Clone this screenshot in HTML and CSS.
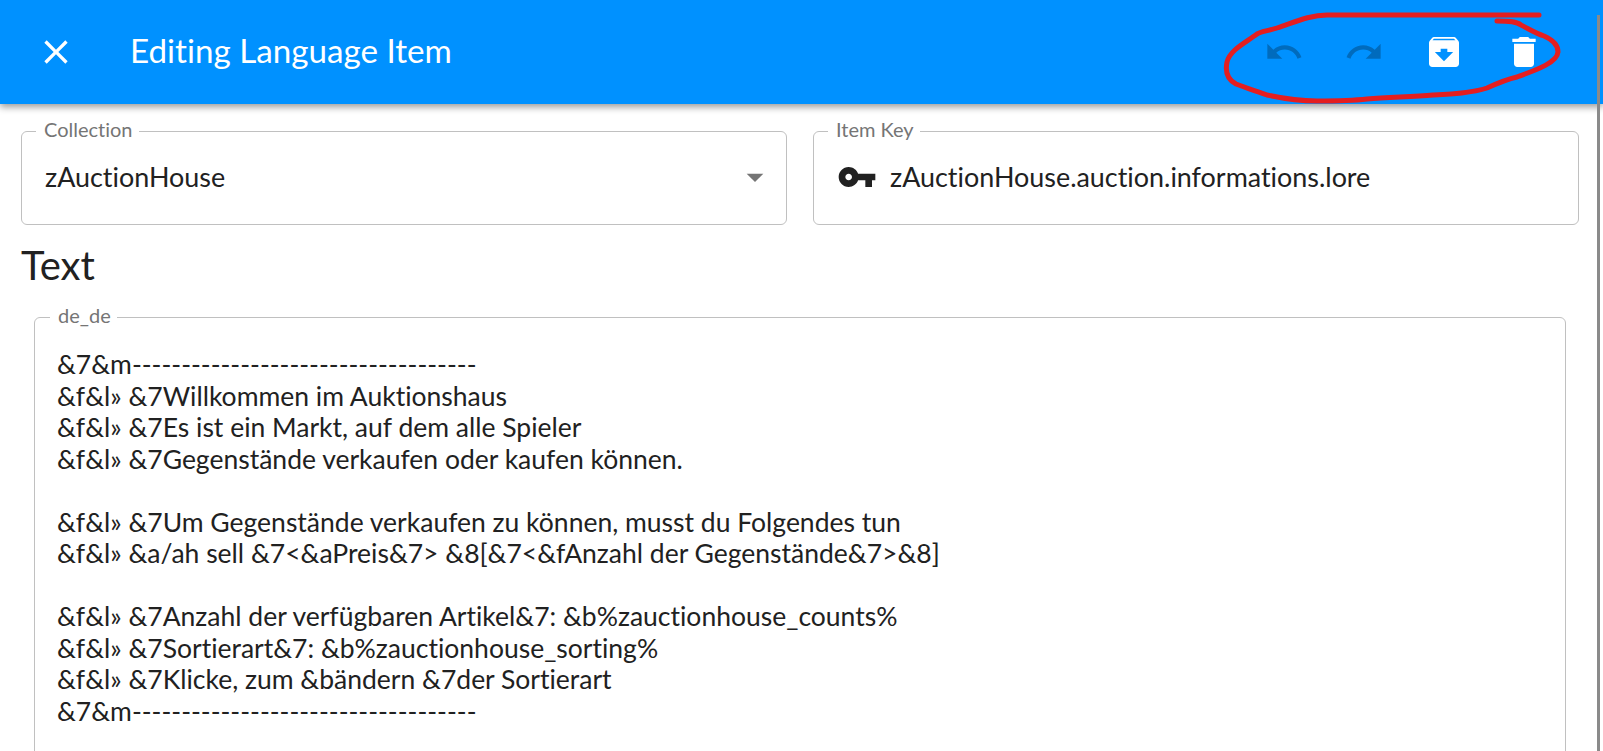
FILE: index.html
```html
<!DOCTYPE html>
<html lang="en">
<head>
    <meta charset="UTF-8">
    <meta name="viewport" content="width=device-width, initial-scale=1.0">
    <title>Editing Language Item</title>
    <link rel="stylesheet" href="styles.css">
</head>
<body>
    <header class="app-bar">
        <svg class="icon close-icon" viewBox="0 0 24 24"><path d="M19 6.41L17.59 5 12 10.59 6.41 5 5 6.41 10.59 12 5 17.59 6.41 19 12 13.41 17.59 19 19 17.59 13.41 12z"/></svg>
        <h1 class="app-title">Editing Language Item</h1>
        <div class="actions">
            <svg class="icon action-icon disabled" viewBox="0 0 24 24"><path d="M12.5 8c-2.65 0-5.05.99-6.9 2.6L2 7v9h9l-3.62-3.62c1.39-1.16 3.16-1.88 5.12-1.88 3.54 0 6.55 2.31 7.6 5.5l2.37-.78C21.08 11.03 17.15 8 12.5 8z"/></svg>
            <svg class="icon action-icon disabled" viewBox="0 0 24 24"><path d="M18.4 10.6C16.55 8.99 14.15 8 11.5 8c-4.65 0-8.58 3.03-9.96 7.22L3.9 16c1.05-3.19 4.05-5.5 7.6-5.5 1.95 0 3.73.72 5.12 1.88L13 16h9V7l-3.6 3.6z"/></svg>
            <svg class="icon action-icon" viewBox="0 0 24 24"><path d="M20.54 5.23l-1.39-1.68C18.88 3.21 18.47 3 18 3H6c-.47 0-.88.21-1.16.55L3.46 5.23C3.17 5.57 3 6.02 3 6.5V19c0 1.1.9 2 2 2h14c1.1 0 2-.9 2-2V6.5c0-.48-.17-.93-.46-1.27zM12 17.5L6.5 12H10v-2h4v2h3.5L12 17.5zM5.12 5l.81-1h12l.94 1H5.12z"/></svg>
            <svg class="icon action-icon" viewBox="0 0 24 24"><path d="M6 19c0 1.1.9 2 2 2h8c1.1 0 2-.9 2-2V7H6v12zM19 4h-3.5l-1-1h-5l-1 1H5v2h14V4z"/></svg>
        </div>
    </header>

    <main class="content">
        <div class="field-row">
            <fieldset class="field">
                <legend>Collection</legend>
                <span class="field-value">zAuctionHouse</span>
                <svg class="icon arrow-icon" viewBox="0 0 24 24"><path d="M7 10l5 5 5-5z"/></svg>
            </fieldset>
            <fieldset class="field">
                <legend>Item Key</legend>
                <svg class="icon key-icon" viewBox="0 0 24 24"><path d="M12.65 10C11.83 7.67 9.61 6 7 6c-3.31 0-6 2.69-6 6s2.69 6 6 6c2.61 0 4.83-1.67 5.65-4H17v4h4v-4h2v-4H12.65zM7 14c-1.1 0-2-.9-2-2s.9-2 2-2 2 .9 2 2-.9 2-2 2z"/></svg>
                <span class="field-value">zAuctionHouse.auction.informations.lore</span>
            </fieldset>
        </div>

        <h2 class="section-title">Text</h2>

        <fieldset class="field text-field">
            <legend>de_de</legend>
            <div class="lore-text">&amp;7&amp;m-----------------------------------
&amp;f&amp;l» &amp;7Willkommen im Auktionshaus
&amp;f&amp;l» &amp;7Es ist ein Markt, auf dem alle Spieler
&amp;f&amp;l» &amp;7Gegenstände verkaufen oder kaufen können.

&amp;f&amp;l» &amp;7Um Gegenstände verkaufen zu können, musst du Folgendes tun
&amp;f&amp;l» &amp;a/ah sell &amp;7&lt;&amp;aPreis&amp;7&gt; &amp;8[&amp;7&lt;&amp;fAnzahl der Gegenstände&amp;7&gt;&amp;8]

&amp;f&amp;l» &amp;7Anzahl der verfügbaren Artikel&amp;7: &amp;b%zauctionhouse_counts%
&amp;f&amp;l» &amp;7Sortierart&amp;7: &amp;b%zauctionhouse_sorting%
&amp;f&amp;l» &amp;7Klicke, zum &amp;bändern &amp;7der Sortierart
&amp;7&amp;m-----------------------------------</div>
        </fieldset>
    </main>

    <!-- scrollbar and the red marker drawn on the screenshot -->
    <div class="scroll-thumb"></div>
    <svg class="scribble" viewBox="0 0 1603 751">
        <path d="M1539 15 L1327 15 C1310 15 1295 22 1277 28 C1268 31 1262 31 1257 34 C1245 43 1230 50 1227 62 C1225 72 1228 80 1236 84 C1246 88 1256 91 1267 95 C1285 99 1300 101 1317 101 C1335 101 1350 101 1367 99 C1390 97 1412 97 1433 95 C1452 94 1472 93 1487 88 C1498 83 1508 79 1517 77 C1530 72 1557 64 1558 52 C1558 44 1551 39 1544 36 C1535 33 1529 29 1521 25 C1516 21 1506 21 1497 21"/>
    </svg>
</body>
</html>
```

FILE: styles.css
```css
/* General */
html, body {
    height: 100%;
}

body {
    margin: 0;
    overflow: hidden;
    background-color: #fff;
    color: #212121;
    font-family: Lato, "Noto Sans", sans-serif;
    font-variant-ligatures: none;
}

.icon {
    width: 40px;
    height: 40px;
    flex-shrink: 0;
    fill: currentColor;
}

/* App bar */
.app-bar {
    position: relative;
    z-index: 1;
    display: flex;
    align-items: center;
    height: 104px;
    padding: 0 59px 0 36px;
    background-color: #0091ff;
    color: #fff;
    box-shadow: 0 3px 7px rgba(0, 0, 0, 0.4);
}

.app-title {
    flex-grow: 1;
    margin: -5px 0 0 54px;
    font-size: 33.2px;
    font-weight: 400;
}

.actions {
    display: flex;
    gap: 40px;
}

.action-icon.disabled {
    color: rgba(0, 0, 0, 0.26);
}

/* Fields */
.content {
    padding: 13px 24px 0 21px;
}

.field-row {
    display: flex;
    gap: 26px;
}

.field {
    flex: 1;
    display: flex;
    align-items: center;
    min-width: 0;
    height: 108px;
    box-sizing: border-box;
    margin: 0;
    padding: 0 23px 16px;
    border: 1px solid #c0c0c0;
    border-radius: 6px;
}

.field legend {
    margin-left: -9px;
    padding: 0 6px 4px 8px;
    color: #757575;
    font-size: 20px;
}

.field-value {
    flex-grow: 1;
    font-size: 26.9px;
}

.key-icon {
    margin-right: 13px;
}

.arrow-icon {
    margin-right: -12px;
    color: #757575;
}

.section-title {
    margin: 16px 0 14px;
    font-size: 40px;
    font-weight: 400;
}

.text-field {
    display: block;
    height: 600px;
    margin: 0 13px;
    padding: 0 22px;
}

.text-field legend {
    margin-left: -7px;
}

.lore-text {
    padding-top: 18px;
    font-size: 26.5px;
    line-height: 31.5px;
    white-space: pre-wrap;
}

/* Overlays */
.scroll-thumb {
    position: absolute;
    top: 15px;
    right: 3px;
    bottom: 0;
    z-index: 2;
    width: 3px;
    background-color: #8a8a8a;
}

.scribble {
    position: absolute;
    top: 0;
    left: 0;
    z-index: 3;
    width: 1603px;
    height: 751px;
    pointer-events: none;
}

.scribble path {
    fill: none;
    stroke: #e41e20;
    stroke-width: 5;
    stroke-linecap: round;
}
```
